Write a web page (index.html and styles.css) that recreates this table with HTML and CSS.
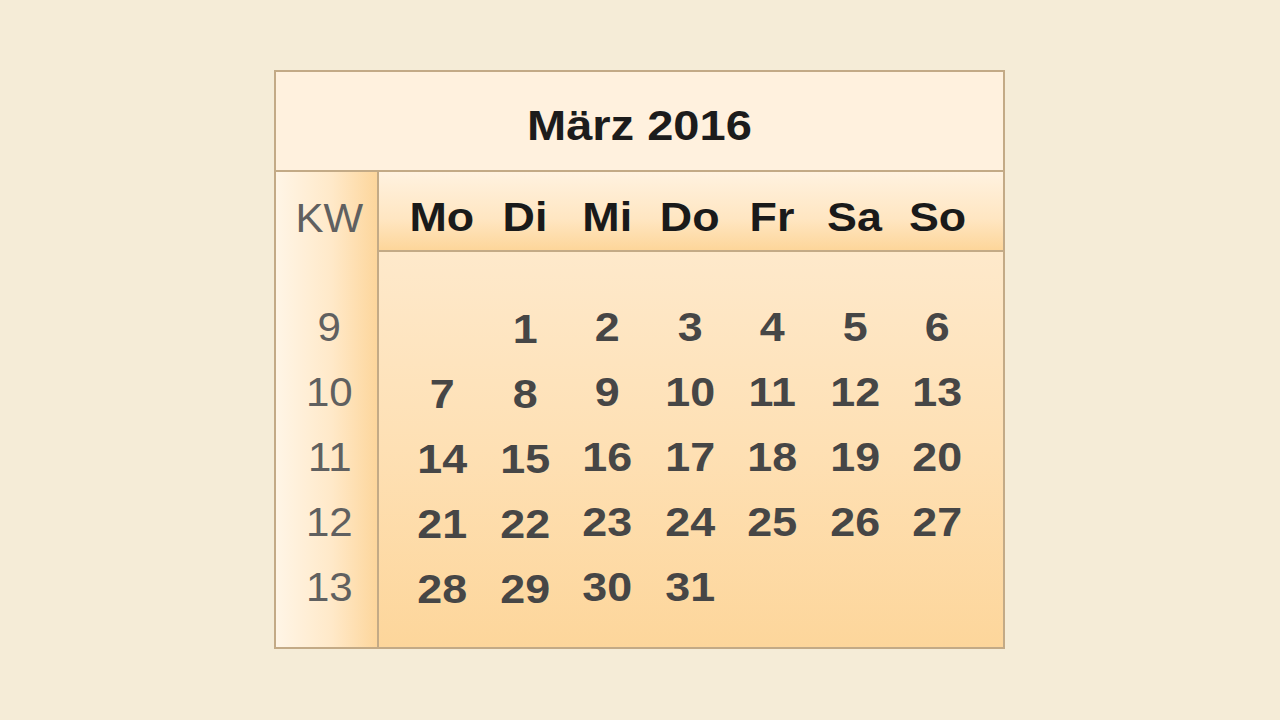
FILE: index.html
```html
<!DOCTYPE html>
<html lang="de">
<head>
<meta charset="utf-8">
<title>März 2016</title>
<link rel="stylesheet" href="styles.css">
</head>
<body>
<div class="page">
  <div class="cal">
    <div class="title"><span class="wide">März 2016</span></div>
    <div class="main">
      <div class="kw-col">
        <div class="kw-head"><span class="wide">KW</span></div>
        <div class="kw-body">
          <div class="kw"><span class="wide">9</span></div>
          <div class="kw"><span class="wide">10</span></div>
          <div class="kw"><span class="wide">11</span></div>
          <div class="kw"><span class="wide">12</span></div>
          <div class="kw"><span class="wide">13</span></div>
        </div>
      </div>
      <div class="days">
        <div class="head">
          <div class="dn"><span class="wide">Mo</span></div>
          <div class="dn"><span class="wide">Di</span></div>
          <div class="dn"><span class="wide">Mi</span></div>
          <div class="dn"><span class="wide">Do</span></div>
          <div class="dn"><span class="wide">Fr</span></div>
          <div class="dn"><span class="wide">Sa</span></div>
          <div class="dn"><span class="wide">So</span></div>
        </div>
        <div class="body">
          <div class="d low"></div>
          <div class="d low"><span class="wide">1</span></div>
          <div class="d"><span class="wide">2</span></div>
          <div class="d"><span class="wide">3</span></div>
          <div class="d"><span class="wide">4</span></div>
          <div class="d"><span class="wide">5</span></div>
          <div class="d"><span class="wide">6</span></div>

          <div class="d low"><span class="wide">7</span></div>
          <div class="d low"><span class="wide">8</span></div>
          <div class="d"><span class="wide">9</span></div>
          <div class="d"><span class="wide">10</span></div>
          <div class="d"><span class="wide">11</span></div>
          <div class="d"><span class="wide">12</span></div>
          <div class="d"><span class="wide">13</span></div>

          <div class="d low"><span class="wide">14</span></div>
          <div class="d low"><span class="wide">15</span></div>
          <div class="d"><span class="wide">16</span></div>
          <div class="d"><span class="wide">17</span></div>
          <div class="d"><span class="wide">18</span></div>
          <div class="d"><span class="wide">19</span></div>
          <div class="d"><span class="wide">20</span></div>

          <div class="d low"><span class="wide">21</span></div>
          <div class="d low"><span class="wide">22</span></div>
          <div class="d"><span class="wide">23</span></div>
          <div class="d"><span class="wide">24</span></div>
          <div class="d"><span class="wide">25</span></div>
          <div class="d"><span class="wide">26</span></div>
          <div class="d"><span class="wide">27</span></div>

          <div class="d low"><span class="wide">28</span></div>
          <div class="d low"><span class="wide">29</span></div>
          <div class="d"><span class="wide">30</span></div>
          <div class="d"><span class="wide">31</span></div>
          <div class="d"></div>
          <div class="d"></div>
          <div class="d"></div>
        </div>
      </div>
    </div>
  </div>
</div>
</body>
</html>
```

FILE: styles.css
```css
* { box-sizing: border-box; }
html, body {
  margin: 0;
  padding: 0;
  background: #f5ecd7;
  font-family: "Liberation Sans", Arial, sans-serif;
}
.page {
  width: 1280px;
  height: 720px;
  padding-top: 70px;
  padding-left: 274px;
}
.cal {
  width: 731px;
  height: 579px;
  border: 2px solid #c3aa86;
  display: flex;
  flex-direction: column;
}
.wide {
  display: inline-block;
  transform: scaleX(1.12);
}
.title {
  height: 100px;
  border-bottom: 2px solid #c3aa86;
  background: #fff1de;
  display: flex;
  align-items: center;
  justify-content: center;
  padding-top: 10px;
  font-weight: bold;
  font-size: 42px;
  color: #1c1c1c;
}
.main {
  flex: 1;
  display: flex;
}
.kw-col {
  width: 103px;
  border-right: 2px solid #c3aa86;
  background: linear-gradient(to right, #fff5e6 0%, #ffe9c9 55%, #fdd69c 100%);
  display: flex;
  flex-direction: column;
  color: #606060;
  font-size: 40px;
  padding-left: 6px;
}
.kw-col .wide { transform: scaleX(1.05); }
.kw-head {
  height: 80px;
  display: flex;
  align-items: center;
  justify-content: center;
  padding-top: 12px;
}
.kw-body {
  padding-top: 42px;
  display: flex;
  flex-direction: column;
}
.kw {
  height: 65px;
  display: flex;
  align-items: center;
  justify-content: center;
  padding-top: 2px;
}
.days {
  flex: 1;
  display: flex;
  flex-direction: column;
}
.head {
  height: 80px;
  border-bottom: 2px solid #c3aa86;
  background: linear-gradient(to bottom, #fff2e0 0%, #ffe6c2 60%, #fdd69a 100%);
  display: grid;
  grid-template-columns: repeat(7, 82.5px);
  padding: 13px 24px 0 22px;
  align-items: center;
  font-weight: bold;
  font-size: 40px;
  color: #1a1a1a;
}
.dn { text-align: center; }
.body {
  flex: 1;
  background: linear-gradient(to bottom, #fee9cb 0%, #fee0b4 50%, #fdd69b 100%);
  display: grid;
  grid-template-columns: repeat(7, 82.5px);
  grid-auto-rows: 65px;
  padding: 43px 24px 0 22px;
  font-weight: bold;
  font-size: 40px;
  color: #464646;
}
.d {
  display: flex;
  align-items: center;
  justify-content: center;
}
.d.low { padding-top: 4px; }
```
